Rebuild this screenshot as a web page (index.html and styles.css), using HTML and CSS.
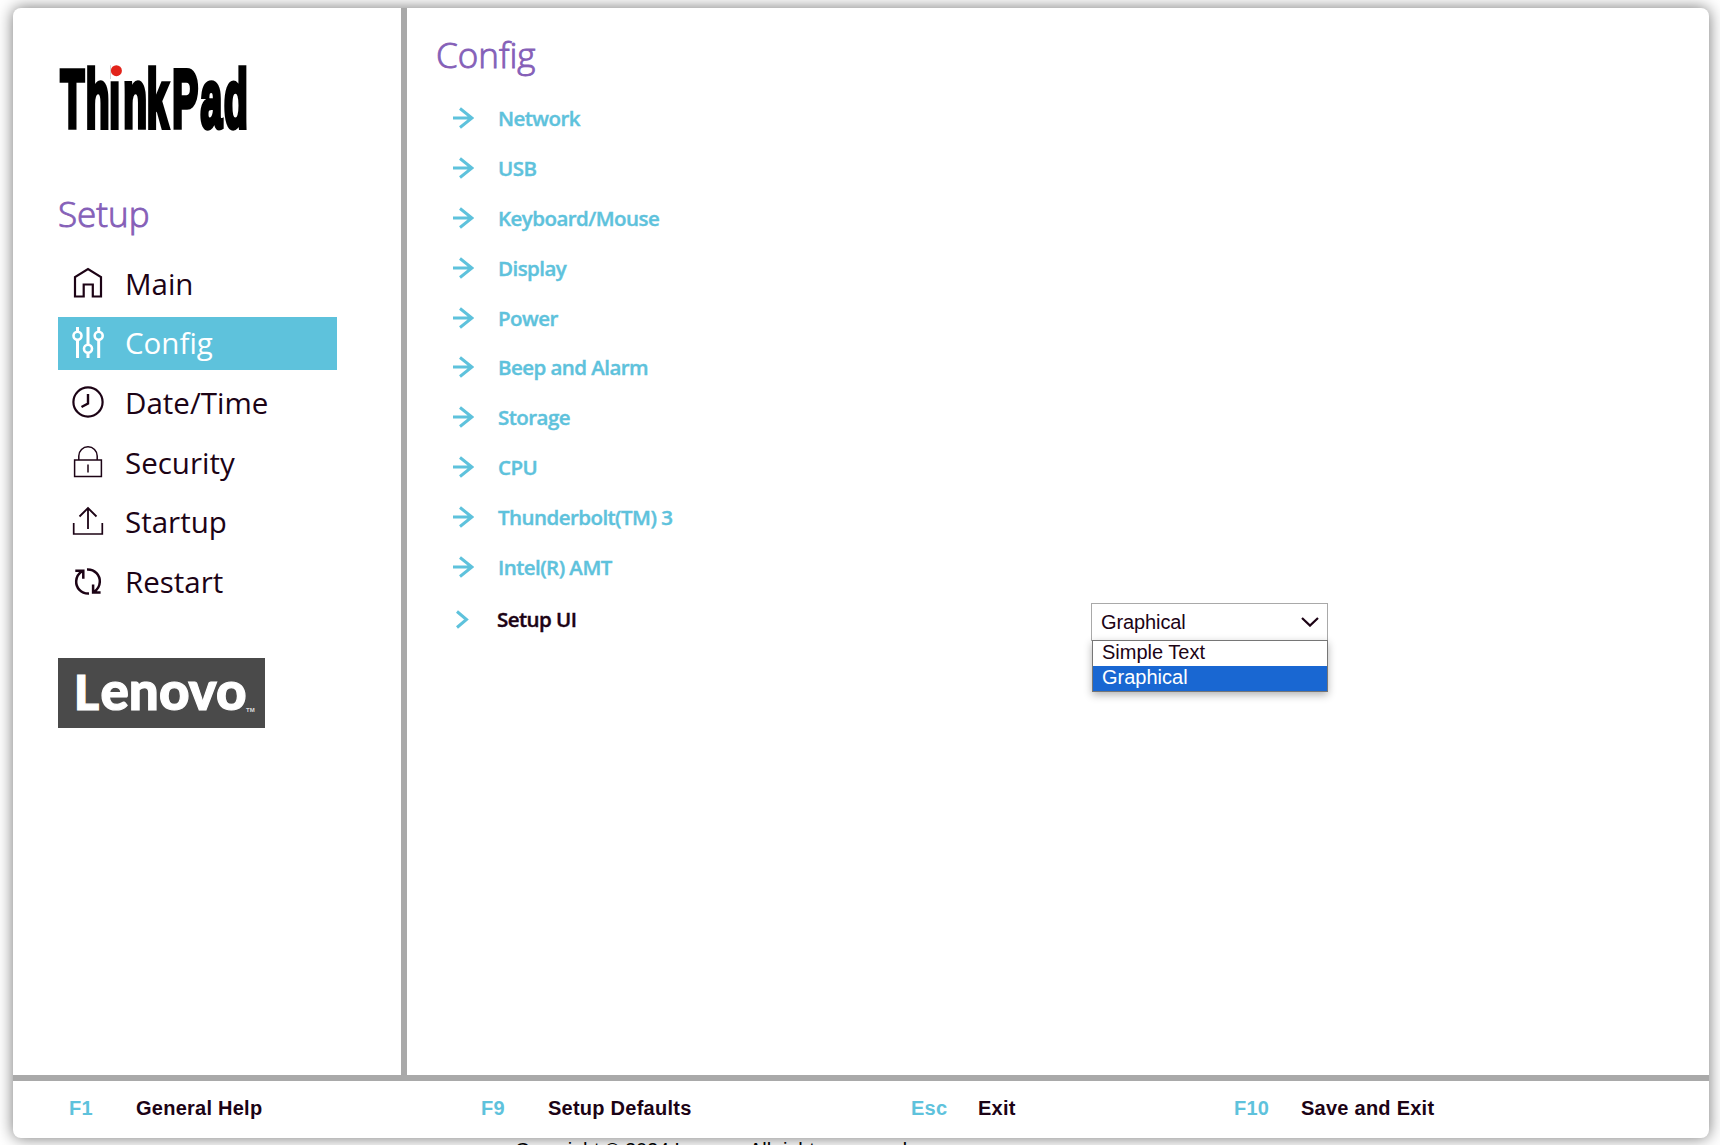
FILE: index.html
```html
<!DOCTYPE html>
<html lang="en">
<head>
<meta charset="utf-8">
<title>ThinkPad Setup</title>
<link rel="stylesheet" href="styles.css">
</head>
<body>
<div class="panel">
  <div class="columns">
    <aside class="sidebar">
      <svg class="thinkpad" width="220" height="96" viewBox="0 0 220 96">
        <g transform="translate(0 63.500) scale(.48 1)"><text class="thinkpad-text" x="5 58 107 136 185 238 297 346" y="0">ThinkPad</text></g>
        <rect x="52.500" y="0" width="12" height="16.500" fill="#fff"/>
        <circle cx="58.400" cy="7.700" r="5.500" fill="#e2231a"/>
      </svg>
      <h1 class="heading">Setup</h1>
      <nav class="menu">
        <a class="menu-item"><svg class="icon" viewBox="0 0 32 32"><path d="M3 29.500V10L16 2l13 8v19.500h-8.200V17.500h-9.100v12z" stroke-width="2.200"/></svg><span>Main</span></a>
        <a class="menu-item active"><svg class="icon" viewBox="0 0 32 32"><path d="M5.500 1v4M5.500 14v18M16 1v17.500M16 27.500V32M26.700 1v4M26.700 14v18" stroke-width="3"/><circle cx="5.500" cy="9.700" r="4" stroke-width="2.600"/><circle cx="16" cy="22.800" r="4" stroke-width="2.600"/><circle cx="26.700" cy="9.700" r="4" stroke-width="2.600"/></svg><span>Config</span></a>
        <a class="menu-item"><svg class="icon" viewBox="0 0 32 32"><circle cx="16" cy="16" r="14.600" stroke-width="2.200"/><path d="M16 8v9.500L9.500 21" stroke-width="2.400"/></svg><span>Date/Time</span></a>
        <a class="menu-item"><svg class="icon" viewBox="0 0 32 32"><path d="M2.600 14h26.800v16.500H2.600zM6.800 14v-4a9.200 9.200 0 0 1 18.400 0v4M16 18.500v8" stroke-width="1.500"/></svg><span>Security</span></a>
        <a class="menu-item"><svg class="icon" viewBox="0 0 32 32"><path d="M16 24V3M7.500 11.500 16 3l8.500 8.500" stroke-width="1.800"/><path d="M1.700 18v11h28.600V18" stroke-width="1.700"/></svg><span>Startup</span></a>
        <a class="menu-item"><svg class="icon" viewBox="0 0 32 32"><path d="M17 28.600C9 29 3.800 22.500 4.200 16c.2-4 2.500-7.800 6.400-10.300M15 4.400c8-.4 13.200 6.100 12.800 12.600-.2 4-2.500 7.800-6 10M3.300 5.700h8v8M28.600 27.400h-7.500v-8" stroke-width="2.500"/></svg><span>Restart</span></a>
      </nav>
      <svg class="lenovo" width="207" height="70" viewBox="0 0 207 70">
        <rect width="207" height="70" fill="#4a4a4a"/>
        <text class="lenovo-text" y="51.500"><tspan class="lenovo-cap" x="16" textLength="28">L</tspan><tspan x="42.500" textLength="146" lengthAdjust="spacingAndGlyphs">enovo</tspan></text>
        <text class="trademark" x="188" y="54">TM</text>
      </svg>
    </aside>
    <main class="content">
      <h2 class="heading">Config</h2>
      <ul class="list">
        <li><svg class="arrow" viewBox="0 0 22 22"><path d="M1 11h19M8 1.500 20 11 8 20.500"/></svg>Network</li>
        <li><svg class="arrow" viewBox="0 0 22 22"><path d="M1 11h19M8 1.500 20 11 8 20.500"/></svg>USB</li>
        <li><svg class="arrow" viewBox="0 0 22 22"><path d="M1 11h19M8 1.500 20 11 8 20.500"/></svg>Keyboard/Mouse</li>
        <li><svg class="arrow" viewBox="0 0 22 22"><path d="M1 11h19M8 1.500 20 11 8 20.500"/></svg>Display</li>
        <li><svg class="arrow" viewBox="0 0 22 22"><path d="M1 11h19M8 1.500 20 11 8 20.500"/></svg>Power</li>
        <li><svg class="arrow" viewBox="0 0 22 22"><path d="M1 11h19M8 1.500 20 11 8 20.500"/></svg>Beep and Alarm</li>
        <li><svg class="arrow" viewBox="0 0 22 22"><path d="M1 11h19M8 1.500 20 11 8 20.500"/></svg>Storage</li>
        <li><svg class="arrow" viewBox="0 0 22 22"><path d="M1 11h19M8 1.500 20 11 8 20.500"/></svg>CPU</li>
        <li><svg class="arrow" viewBox="0 0 22 22"><path d="M1 11h19M8 1.500 20 11 8 20.500"/></svg>Thunderbolt(TM) 3</li>
        <li><svg class="arrow" viewBox="0 0 22 22"><path d="M1 11h19M8 1.500 20 11 8 20.500"/></svg>Intel(R) AMT</li>
      </ul>
      <div class="setting">
        <svg class="arrow" viewBox="0 0 22 22"><path d="M5 3.500 14.500 11.500 5 19.500"/></svg>
        <span class="setting-name">Setup UI</span>
        <div class="select">
          <span>Graphical</span>
          <svg class="chevron" viewBox="0 0 18 10"><path d="M1 1l8 7.600L17 1"/></svg>
          <div class="options">
            <div class="option">Simple Text</div>
            <div class="option chosen">Graphical</div>
          </div>
        </div>
      </div>
    </main>
  </div>
  <footer class="keys">
    <div class="key"><b>F1</b><span>General Help</span></div>
    <div class="key"><b>F9</b><span>Setup Defaults</span></div>
    <div class="key"><b>Esc</b><span>Exit</span></div>
    <div class="key"><b>F10</b><span>Save and Exit</span></div>
  </footer>
</div>
<p class="copyright">Copyright © 2024 Lenovo. All rights reserved</p>
</body>
</html>
```
FILE: styles.css
```css
* { box-sizing: border-box; }
html { height: 1145px; overflow: hidden; }
body {
  margin: 0;
  height: 1145px;
  overflow: hidden;
  padding: 8px 11px 0 13px;
  background: #fff;
  color: #1c0315;
  font-family: "Open Sans", sans-serif;
}
.panel {
  display: flex;
  flex-direction: column;
  height: 1130px;
  background: #fff;
  border-radius: 8px;
  box-shadow: 0 0 16px rgba(0, 0, 0, .55);
}
.columns { display: flex; height: 1067px; }
.sidebar {
  display: flex;
  flex-direction: column;
  flex-shrink: 0;
  width: 394px;
  padding: 55px 0 0 45px;
  border-right: 6px solid #a9a9a9;
}
.thinkpad { display: block; flex-shrink: 0; overflow: visible; }
.thinkpad-text {
  font: bold 81px "Liberation Sans", sans-serif;
  fill: #000;
  stroke: #000;
  stroke-width: 5.500px;
}
.heading {
  margin: 0;
  color: #8560b8;
  font-size: 35px;
  line-height: 48px;
  font-weight: 300;
  -webkit-text-stroke: .9px #8560b8;
}
.sidebar .heading { margin-top: 31px; }
.menu { display: flex; flex-direction: column; gap: 6.700px; margin-top: 19px; }
.menu-item {
  display: flex;
  align-items: center;
  gap: 21px;
  width: 279px;
  height: 53px;
  padding-left: 14px;
  font-size: 29.500px;
}
.menu-item.active { background: #5ec2dc; color: #fff; }
.menu-item span { padding-bottom: 1px; }
.icon { width: 32px; height: 32px; margin-bottom: 2px; fill: none; stroke: currentColor; }
.lenovo { display: block; margin-top: 50px; }
.lenovo-text { font: 900 54px Lato, sans-serif; fill: #fff; stroke: #fff; stroke-width: 1.200px; }
.lenovo-cap { font-size: 48px; }
.trademark { font: bold 6px "Liberation Sans", sans-serif; fill: #ddd; }
.content { width: 1302px; flex-shrink: 0; padding: 23px 0 0 29px; }
.list { list-style: none; margin: 14px 0 0; padding: 0; }
.list li, .setting {
  display: flex;
  align-items: center;
  height: 49.900px;
  padding-left: 16px;
  gap: 24px;
  color: #5ec2dc;
  font-size: 20.500px;
  font-weight: 600;
  letter-spacing: -.55px;
  -webkit-text-stroke: .4px currentColor;
}
.arrow { width: 22px; height: 22px; fill: none; stroke: #5ec2dc; stroke-width: 3; }
.setting { height: 54px; }
.setting-name { width: 570px; margin-left: -1px; color: #1c0315; }
.select {
  position: relative;
  display: flex;
  align-items: center;
  justify-content: space-between;
  width: 237px;
  height: 38px;
  margin-top: 7px;
  padding: 0 8px 0 9px;
  border: 1px solid #a9a9a9;
  color: #1c0315;
  font: 20px "Liberation Sans", sans-serif;
  letter-spacing: -.1px;
  -webkit-text-stroke: 0;
}
.chevron { width: 18px; height: 10px; fill: none; stroke: #1c0315; stroke-width: 2.200; }
.options {
  position: absolute;
  left: 0;
  top: 36px;
  width: 236px;
  border: 1px solid #767676;
  background: #fff;
  box-shadow: 0 3px 8px rgba(0, 0, 0, .3);
  letter-spacing: 0;
}
.option { height: 25px; padding-left: 9px; line-height: 23px; }
.option.chosen { background: #1967d2; color: #fff; }
.keys {
  display: grid;
  grid-template-columns: 412px 430px 323px 1fr;
  height: 63px;
  padding: 13px 0 0 56px;
  border-top: 6px solid #a9a9a9;
  font: bold 20px/28px "Liberation Sans", sans-serif;
  letter-spacing: .25px;
}
.key { display: flex; }
.key b { width: 67px; color: #5ec2dc; }
.copyright {
  margin: 0 0 0 502px;
  font: 20px/24px "Liberation Sans", sans-serif;
  letter-spacing: -.12px;
  color: #000;
}
```
